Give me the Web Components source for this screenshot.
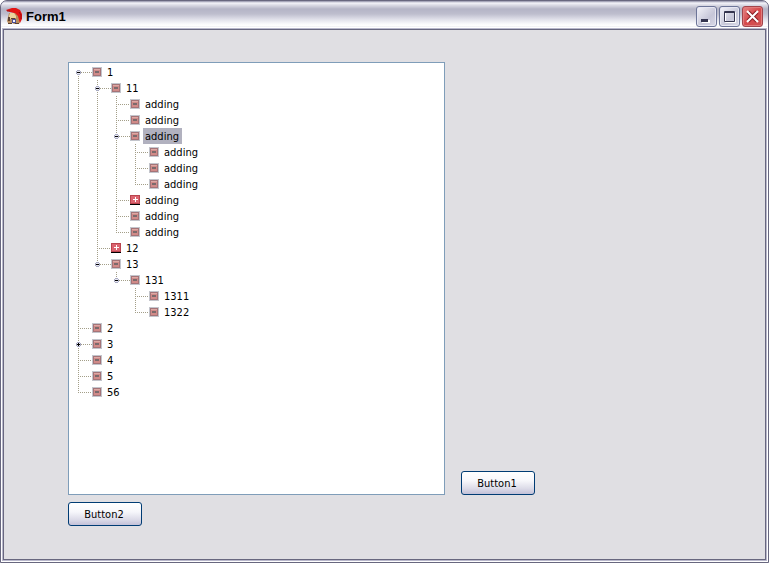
<!DOCTYPE html>
<html lang="en">
<head>
<meta charset="utf-8">
<title>Form1</title>
<style>
  html {
    background: #fff;
  }

  body {
    margin: 0;
    font: 11px/16px 'DejaVu Sans Condensed', 'Liberation Sans', sans-serif;
    color: #000;
  }

  .form {
    flex: 1;
    display: grid;
    grid-template-columns: 377fr 304fr;
    grid-template-rows: 1fr auto;
    column-gap: 16px;
    row-gap: 7px;
    padding: 32px 0 33px 64px;
  }

  .form form-button {
    align-self: end;
    justify-self: start;
  }
</style>
</head>
<body>
<form-window caption="Form1">
  <main class="form">
    <tree-view>
      <tree-item label="1" state="open">
        <tree-item label="11" state="open">
          <tree-item label="adding"></tree-item>
          <tree-item label="adding"></tree-item>
          <tree-item label="adding" state="open" selected>
            <tree-item label="adding"></tree-item>
            <tree-item label="adding"></tree-item>
            <tree-item label="adding"></tree-item>
          </tree-item>
          <tree-item label="adding" icon="plus"></tree-item>
          <tree-item label="adding"></tree-item>
          <tree-item label="adding"></tree-item>
        </tree-item>
        <tree-item label="12" icon="plus"></tree-item>
        <tree-item label="13" state="open">
          <tree-item label="131" state="open">
            <tree-item label="1311"></tree-item>
            <tree-item label="1322"></tree-item>
          </tree-item>
        </tree-item>
      </tree-item>
      <tree-item label="2"></tree-item>
      <tree-item label="3" state="closed"></tree-item>
      <tree-item label="4"></tree-item>
      <tree-item label="5"></tree-item>
      <tree-item label="56"></tree-item>
    </tree-view>
    <form-button>Button1</form-button>
    <form-button>Button2</form-button>
  </main>
</form-window>

<script>
class FormWindow extends HTMLElement {
  connectedCallback() {
    const shadowRoot = this.attachShadow({ mode: 'open' });

    shadowRoot.innerHTML = `
      <style>
        :host {
          display: flex;
          flex-direction: column;
          box-sizing: border-box;
          min-height: 100vh;
          border: 1px solid #68677f;
          border-radius: 7px 7px 0 0;
          background: #b9b8cc;
          overflow: hidden;
        }

        .title-bar {
          display: flex;
          align-items: center;
          gap: 2px;
          height: 28px;
          box-sizing: border-box;
          padding: 3px 5px 0 5px;
          background: linear-gradient(#8f8ea6 0, #f4f4fa 2px, #dcdce6 4px, #b4b4c6 8px, #bebece 13px, #dedee8 18px, #fafafc 23px, #fff 25px, #b9b8cc 28px);
        }

        h1 {
          flex: 1;
          margin: 0 0 0 1px;
          padding-top: 1px;
          font: bold 13px/20px 'Liberation Sans', sans-serif;
        }

        .title-bar button {
          width: 21px;
          height: 21px;
          padding: 0;
          border: 1px solid #6d7598;
          border-radius: 3px;
          background: linear-gradient(135deg, #f4f4fa, #c6c6d8 60%, #dadae8);
          box-shadow: inset 0 0 0 1px #e6e6f2;
        }

        .title-bar button.close {
          border-color: #a2444c;
          background: linear-gradient(135deg, #e48484, #d6494c 50%, #cf5454);
          box-shadow: inset 0 0 0 1px #e27c7c;
        }

        .title-bar svg {
          display: block;
        }

        .client {
          flex: 1;
          display: flex;
          flex-direction: column;
          margin: 0 2px 2px;
          border: 1px solid #68677f;
          background: #e0dfe3;
          box-shadow: 0 0 0 1px #b9b8cc, 0 0 0 2px #fff;
        }
      </style>
      <header class="title-bar">
        <svg width="17" height="17" viewBox="0 0 17 17" aria-hidden="true">
          <path d="M0 2l3-1 3-1h4l4 2 2 4v5l-2 4-2-1-1-6-3-3-4-1-2-1H1z" fill="#e31414"/>
          <path d="M1 3h3M13 4l2 3v4" fill="none" stroke="#a30e10"/>
          <path d="M3 5h6l3 3 1 4 1 3-2 1H8l-2-1H2l-1-2 1-4z" fill="#b98d5c"/>
          <path d="M4 5h4l2 3v2H6l-3 2V8z" fill="#ecd39b"/>
          <path d="M2 9h2v4H2zM5 10h4v1H5z" fill="#5c4030"/>
          <path d="M6 11h4v4H6z" fill="#4b4f94"/>
          <path d="M7 12h2v2H7z" fill="#f2f2fc"/>
          <path d="M2 15.500h4M9 15.500h4" stroke="#5c4030"/>
        </svg>
        <h1></h1>
        <button type="button" aria-label="Minimize">
          <svg width="19" height="19" viewBox="0 0 19 19">
            <path d="M5 13h8v3H5z" fill="#fff"/>
            <path d="M4 12h7v3H4z" fill="#35354f"/>
          </svg>
        </button>
        <button type="button" aria-label="Maximize">
          <svg width="19" height="19" viewBox="0 0 19 19">
            <path d="M5.500 5.500h10v10h-10z" fill="none" stroke="#fff"/>
            <path d="M4.500 4.500h10v10h-10zM4 5.500h11" fill="none" stroke="#35354f"/>
          </svg>
        </button>
        <button type="button" class="close" aria-label="Close">
          <svg width="19" height="19" viewBox="0 0 19 19">
            <path d="M5 5l9 9M14 5l-9 9" stroke="#8a2028" stroke-width="4"/>
            <path d="M4 4l11 11M15 4L4 15" stroke="#fff" stroke-width="2"/>
          </svg>
        </button>
      </header>
      <div class="client"><slot></slot></div>`;

    shadowRoot.querySelector('h1').textContent = this.getAttribute('caption');
  }
}
window.customElements.define('form-window', FormWindow);

class FormButton extends HTMLElement {
  connectedCallback() {
    const shadowRoot = this.attachShadow({ mode: 'open' });

    shadowRoot.innerHTML = `
      <style>
        :host {
          display: block;
        }

        button {
          display: block;
          min-width: 74px;
          height: 24px;
          margin: 0;
          padding: 2px 10px 0 8px;
          border: 1px solid #003c74;
          border-radius: 3px;
          background: linear-gradient(#fff, #f7f7fb 40%, #dcdbe8 75%, #c3c1d8);
          font: inherit;
          color: inherit;
        }
      </style>
      <button type="button"><slot></slot></button>`;
  }
}
window.customElements.define('form-button', FormButton);

class TreeView extends HTMLElement {
  connectedCallback() {
    const shadowRoot = this.attachShadow({ mode: 'open' });

    shadowRoot.innerHTML = `
      <style>
        :host {
          display: block;
          border: 1px solid #7f9db9;
          background: #fff;
          padding: 1px 7px;
        }

        /* the trunk begins at the first node, not above it */
        ::slotted(tree-item:first-of-type) {
          --line-top: 8px;
        }
      </style>
      <slot></slot>`;

    this.setAttribute('role', 'tree');
  }
}
window.customElements.define('tree-view', TreeView);

const nodeIcons = {
  minus: `
    <path d="M0 0h10v10H0z" fill="#c3c5cc"/>
    <path d="M1 1h8v8H1z" fill="#a47478"/>
    <path d="M2 2h6v6H2z" fill="#d18a88"/>
    <path d="M2 2h6v1H2z" fill="#dda9a4"/>
    <path d="M3 4h4v2H3z" fill="#7c6a6c"/>`,
  plus: `
    <path d="M0 0h10v9H0z" fill="#b8444e"/>
    <path d="M1 1h8v7H1z" fill="#dc6470"/>
    <path d="M5 2h1v5H5zM3 4h5v1H3z" fill="#fff"/>
    <path d="M0 9h10v1H0z" fill="#000"/>`
};

class TreeItem extends HTMLElement {
  connectedCallback() {
    const shadowRoot = this.attachShadow({ mode: 'open' });
    const state = this.getAttribute('state');
    const icon = this.getAttribute('icon') || 'minus';

    shadowRoot.innerHTML = `
      <style>
        :host {
          display: block;
          background: repeating-linear-gradient(#a39e88 0 1px, transparent 1px 2px) 2px var(--line-top, 0) / 1px 100% no-repeat;
        }

        :host(:last-of-type) {
          background-size: 1px 9px;
        }

        .row {
          display: flex;
          align-items: center;
          height: 16px;
          padding-left: 2px;
        }

        :host([state]) .row {
          padding-left: 0;
        }

        .expander {
          flex: none;
          width: 5px;
          height: 5px;
          margin-top: 1px;
          padding: 0;
          border: 0;
          background: none;
        }

        svg {
          display: block;
          flex: none;
        }

        .branch {
          width: 14px;
          height: 1px;
          margin-top: 1px;
          background: repeating-linear-gradient(90deg, #a39e88 0 1px, transparent 1px 2px);
        }

        :host([state]) .branch {
          width: 11px;
        }

        .label {
          height: 15px;
          margin-left: 3px;
          padding: 1px 3px 0 2px;
          white-space: nowrap;
        }

        :host([selected]) .label {
          background: #b1b1bf;
        }

        .children {
          --line-top: 0;
          margin-left: 19px;
        }
      </style>
      <div class="row">
        ${state ? `
          <button type="button" class="expander" aria-label="Toggle">
            <svg width="5" height="5" viewBox="0 0 5 5">
              <path d="M1 0h3v1h1v3H4v1H1V4H0V1h1z" fill="#a9abc2"/>
              <path d="M1 1h3v3H1z" fill="#e8e8f2"/>
              <path d="${state === 'open' ? 'M1 2h3v1H1z' : 'M1 2h3v1H1zM2 1h1v3H2z'}" fill="#000"/>
            </svg>
          </button>` : ''}
        <span class="branch"></span>
        <svg width="10" height="10" viewBox="0 0 10 10" aria-hidden="true">${nodeIcons[icon]}</svg>
        <span class="label"></span>
      </div>
      <div class="children" role="group"><slot></slot></div>`;

    shadowRoot.querySelector('.label').textContent = this.getAttribute('label');

    this.setAttribute('role', 'treeitem');
    if (state) this.setAttribute('aria-expanded', state === 'open');
  }
}
window.customElements.define('tree-item', TreeItem);
</script>
</body>
</html>
